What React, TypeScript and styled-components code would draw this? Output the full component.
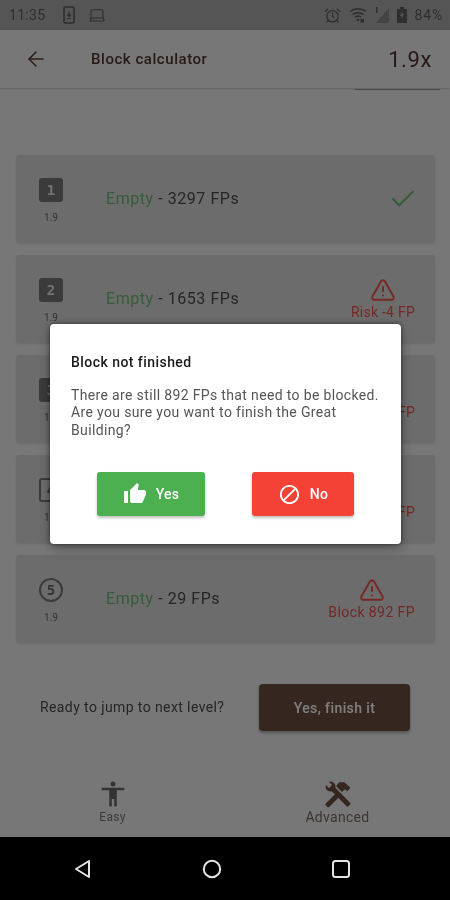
import React from "react";
import styled, { createGlobalStyle } from "styled-components";
import { ArrowLeft, Check, TriangleAlert, Laptop, AlarmClock } from "lucide-react";
import { MdThumbUp, MdBlock, MdAccessibility } from "react-icons/md";

const GlobalStyle = createGlobalStyle`
  html, body {
    margin: 0;
    padding: 0;
    background: #000;
  }
  * {
    box-sizing: border-box;
  }
`;

const Screen = styled.div`
  position: relative;
  width: 450px;
  height: 900px;
  overflow: hidden;
  display: flex;
  flex-direction: column;
  background: #eeeeee;
  font-family: Roboto, "Liberation Sans", sans-serif;
  filter: blur(0.55px);
`;

const StatusBar = styled.div`
  height: 30px;
  flex: none;
  display: flex;
  align-items: center;
  padding: 0 7px 0 9px;
  background: #ababab;
  color: #5c5c5c;
  font-size: 14px;
`;

const StatusTime = styled.span`
  margin-right: 18px;
  letter-spacing: 0.3px;
`;

const StatusRight = styled.div`
  margin-left: auto;
  display: flex;
  align-items: center;
  gap: 8px;
`;

const BatteryText = styled.span`
  letter-spacing: 0.8px;
`;

const AppBar = styled.header`
  position: relative;
  height: 58px;
  flex: none;
  display: flex;
  align-items: center;
  padding: 0 18px 0 24px;
  background: #eeeeee;
  box-shadow: 0 1px 2px rgba(0, 0, 0, 0.18);
  color: #5d4037;

  &::after {
    content: "";
    position: absolute;
    right: 10px;
    bottom: -2px;
    width: 85px;
    height: 1px;
    background: rgba(0, 0, 0, 0.35);
  }
`;

const AppTitle = styled.h1`
  margin: 0 0 0 43px;
  font-size: 15px;
  font-weight: 500;
  letter-spacing: 0.55px;
  color: #4e342e;
`;

const Multiplier = styled.span`
  margin-left: auto;
  font-size: 22px;
  color: #4e342e;
  letter-spacing: 0.6px;
`;

const CardList = styled.main`
  display: flex;
  flex-direction: column;
  gap: 12px;
  padding: 67px 15px 0 16px;
`;

const Card = styled.section`
  height: 88px;
  display: flex;
  align-items: center;
  padding: 0 20px 0 23px;
  background: #d9d9d9;
  border-radius: 3px;
  box-shadow: 0 1px 2px rgba(0, 0, 0, 0.1);
`;

const LevelColumn = styled.div`
  width: 24px;
  display: flex;
  flex-direction: column;
  align-items: center;
  gap: 10px;
  padding-top: 3px;
  flex: none;
`;

const LevelBadge = styled.div<{ $kind: "filled" | "outline" | "circle" }>`
  width: 24px;
  height: 24px;
  display: flex;
  align-items: center;
  justify-content: center;
  font-family: "DejaVu Sans Mono", monospace;
  font-size: 14px;
  font-weight: 700;
  border-radius: ${({ $kind }) => ($kind === "circle" ? "50%" : "3px")};
  border: 2px solid #777;
  background: ${({ $kind }) => ($kind === "filled" ? "#777" : "transparent")};
  color: ${({ $kind }) => ($kind === "filled" ? "#e4e4e4" : "#666")};
`;

const LevelRatio = styled.span`
  font-size: 10px;
  line-height: 12px;
  color: #666;
`;

const CardText = styled.div`
  margin-left: 43px;
  margin-top: -2px;
  font-size: 16px;
  letter-spacing: 0.55px;
  color: #4a4a4a;
`;

const EmptyLabel = styled.span`
  color: #6fb873;
`;

const CardStatus = styled.div<{ $wide?: boolean }>`
  margin-left: auto;
  display: flex;
  flex-direction: column;
  align-items: center;
  color: #ea5148;
  font-size: 14px;
  line-height: 18px;
  letter-spacing: ${({ $wide }) => ($wide ? "0.42px" : "0.25px")};
`;

const CheckMark = styled(Check)`
  color: #62bb66;
  margin-right: -3px;
`;

const FinishRow = styled.div`
  display: flex;
  align-items: center;
  justify-content: space-between;
  padding: 41px 40px 0 40px;
`;

const FinishText = styled.span`
  margin-top: -2px;
  font-size: 14px;
  letter-spacing: 0.4px;
  color: #4a4a4a;
`;

const FinishButton = styled.button`
  width: 151px;
  height: 47px;
  border: 0;
  border-radius: 4px;
  background: #6d4c41;
  color: #fff;
  font: 500 14px Roboto, sans-serif;
  letter-spacing: 0.4px;
  box-shadow: 0 2px 3px rgba(0, 0, 0, 0.3);
`;

const BottomTabs = styled.nav`
  margin-top: auto;
  height: 58px;
  flex: none;
  display: grid;
  grid-template-columns: 1fr 1fr;
`;

const Tab = styled.div<{ $active?: boolean }>`
  display: flex;
  flex-direction: column;
  align-items: center;
  color: ${({ $active }) => ($active ? "#7a6a64" : "#777")};
  font-size: ${({ $active }) => ($active ? "14px" : "12px")};
  line-height: 16px;
  letter-spacing: 0.3px;
`;

const EasyIcon = styled(MdAccessibility)`
  color: #666;
`;

const ToolsGlyph = styled.svg`
  color: #6d4c41;
`;

const SystemNav = styled.div`
  height: 63px;
  flex: none;
  display: flex;
  align-items: center;
  background: #000;
  padding-left: 73px;
  gap: 109px;
  color: #e4e4e4;
`;

const Scrim = styled.div`
  position: absolute;
  top: 0;
  left: 0;
  width: 100%;
  height: 837px;
  padding-top: 30px;
  display: flex;
  align-items: center;
  justify-content: center;
  background: rgba(0, 0, 0, 0.5);
`;

const Dialog = styled.div`
  width: 351px;
  height: 220px;
  margin-left: 1px;
  padding: 30px 20px 0 21px;
  background: #fff;
  border-radius: 4px;
  box-shadow: 0 0 4px rgba(0, 0, 0, 0.5), 0 4px 12px rgba(0, 0, 0, 0.3);
`;

const DialogTitle = styled.h2`
  margin: 0 0 16px;
  font-size: 14px;
  line-height: 17px;
  font-weight: 500;
  letter-spacing: 0.45px;
  color: #1a1a1a;
`;

const DialogBody = styled.p`
  margin: 0;
  font-size: 14px;
  line-height: 17.5px;
  letter-spacing: 0.35px;
  color: #555;
`;

const DialogActions = styled.div`
  display: flex;
  margin-top: 33px;
  padding-left: 26px;
  gap: 47px;
`;

const DialogButton = styled.button<{ $color: string; $width: number }>`
  width: ${({ $width }) => $width}px;
  height: 44px;
  display: flex;
  align-items: center;
  justify-content: center;
  gap: 9px;
  border: 0;
  border-radius: 3px;
  background: ${({ $color }) => $color};
  color: #fff;
  font: 500 14px Roboto, sans-serif;
  letter-spacing: 0.3px;
  box-shadow: 0 2px 3px rgba(0, 0, 0, 0.25);
`;

// the FP text of levels 3 and 4 sits behind the dialog, so it is left out
const levels = [
  { kind: "filled", n: "1", fps: "3297", status: "" },
  { kind: "filled", n: "2", fps: "1653", status: "Risk -4 FP" },
  { kind: "filled", n: "3", fps: "", status: "Risk -4 FP" },
  { kind: "outline", n: "4", fps: "", status: "Risk -4 FP" },
  { kind: "circle", n: "5", fps: "29", status: "Block 892 FP" },
] as const;

function PhoneIcon() {
  return (
    <svg width="12" height="18" viewBox="0 0 12 18" fill="none" stroke="currentColor">
      <rect x="1" y="1" width="10" height="16" rx="1.5" strokeWidth="1.6" />
      <path d="M6 5.5v4.5M4 8.5l2 2 2-2M4 12.5h4" strokeWidth="1.2" />
    </svg>
  );
}

function WifiIcon() {
  return (
    <svg width="18" height="18" viewBox="0 0 18 18" fill="none" stroke="currentColor" strokeWidth="1.5">
      <path d="M1 5.5c4.500-3.800 11.500-3.800 16 0M3.500 8.500c3-2.500 8-2.500 11 0M6 11.200c1.700-1.300 4.300-1.300 6 0" />
      <circle cx="9" cy="14" r="1.300" fill="currentColor" stroke="none" />
      <rect x="11.500" y="13" width="3.500" height="3.500" fill="currentColor" stroke="none" />
    </svg>
  );
}

function SignalIcon() {
  return (
    <svg width="14" height="16" viewBox="0 0 14 16">
      <path d="M14 1v15H1z" fill="currentColor" opacity="0.45" />
      <rect x="1" y="0" width="1.500" height="6" fill="currentColor" />
    </svg>
  );
}

function BatteryIcon() {
  return (
    <svg width="10" height="16" viewBox="0 0 10 16">
      <path d="M3 0h4v2h3v14H0V2h3z" fill="currentColor" />
      <path d="M5.500 3.500L3 9h1.800l-.5 3.500L7 7H5.200z" fill="#ababab" />
    </svg>
  );
}

function ToolsIcon() {
  return (
    <ToolsGlyph width="30" height="30" viewBox="0 0 24 24" fill="currentColor">
      <path d="M2.200 19.600l9.200-9.200 2.700 2.700-9.200 9.200a1 1 0 0 1-1.400 0l-1.300-1.300a1 1 0 0 1 0-1.400z" />
      <path d="M10.500 5.500L13 2.500h4l5 4.500-2.500 2.800-2-1.700-2.300 2.300-2.500-2.500z" />
      <path d="M21.700 20.300l-1.400 1.400a1 1 0 0 1-1.400 0L7 9.850A3.800 3.800 0 0 1 6 10a4 4 0 0 1-3.800-5.300l2.600 2.500 2.400-2.400-2.500-2.600A4 4 0 0 1 10 6a3.800 3.800 0 0 1-.15 1L21.700 18.900a1 1 0 0 1 0 1.400z" />
    </ToolsGlyph>
  );
}

export default function App() {
  return (
    <Screen>
      <GlobalStyle />
      <StatusBar>
        <StatusTime>11:35</StatusTime>
        <PhoneIcon />
        <Laptop size={18} strokeWidth={1.4} style={{ marginLeft: 13 }} />
        <StatusRight>
          <AlarmClock size={17} strokeWidth={1.8} />
          <WifiIcon />
          <SignalIcon />
          <BatteryIcon />
          <BatteryText>84%</BatteryText>
        </StatusRight>
      </StatusBar>

      <AppBar>
        <ArrowLeft size={24} strokeWidth={1.6} />
        <AppTitle>Block calculator</AppTitle>
        <Multiplier>1.9x</Multiplier>
      </AppBar>

      <CardList>
        {levels.map((level, i) => (
          <Card key={level.n}>
            <LevelColumn>
              <LevelBadge $kind={level.kind}>{level.n}</LevelBadge>
              <LevelRatio>1.9</LevelRatio>
            </LevelColumn>
            {level.fps && (
              <CardText>
                <EmptyLabel>Empty</EmptyLabel> - {level.fps} FPs
              </CardText>
            )}
            <CardStatus $wide={i === 4}>
              {level.status ? (
                <>
                  <TriangleAlert size={26} strokeWidth={1.8} />
                  {level.status}
                </>
              ) : (
                <CheckMark size={30} strokeWidth={1.5} />
              )}
            </CardStatus>
          </Card>
        ))}
      </CardList>

      <FinishRow>
        <FinishText>Ready to jump to next level?</FinishText>
        <FinishButton>Yes, finish it</FinishButton>
      </FinishRow>

      <BottomTabs>
        <Tab>
          <EasyIcon size={30} />
          Easy
        </Tab>
        <Tab $active>
          <ToolsIcon />
          Advanced
        </Tab>
      </BottomTabs>

      <SystemNav>
        <svg width="20" height="20" viewBox="0 0 20 20" fill="none" stroke="currentColor" strokeWidth="2" strokeLinejoin="round">
          <path d="M16 2v16L3 10z" />
        </svg>
        <svg width="20" height="20" viewBox="0 0 20 20" fill="none" stroke="currentColor" strokeWidth="2">
          <circle cx="10" cy="10" r="8.200" />
        </svg>
        <svg width="20" height="20" viewBox="0 0 20 20" fill="none" stroke="currentColor" strokeWidth="2">
          <rect x="2" y="2" width="16" height="16" rx="2.500" />
        </svg>
      </SystemNav>

      <Scrim>
        <Dialog>
          <DialogTitle>Block not finished</DialogTitle>
          <DialogBody>
            There are still 892 FPs that need to be blocked.
            <br />
            Are you sure you want to finish the Great
            <br />
            Building?
          </DialogBody>
          <DialogActions>
            <DialogButton $color="#4caf50" $width={108}>
              <MdThumbUp size={24} />
              Yes
            </DialogButton>
            <DialogButton $color="#f44336" $width={102}>
              <MdBlock size={23} />
              No
            </DialogButton>
          </DialogActions>
        </Dialog>
      </Scrim>
    </Screen>
  );
}
